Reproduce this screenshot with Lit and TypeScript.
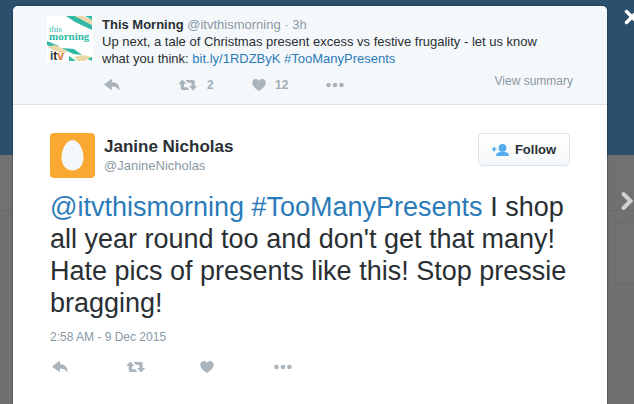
import { LitElement, html, css, svg } from "lit";
import { customElement, property } from "lit/decorators.js";

const replyIcon = svg`<svg width="16" height="12" viewBox="0 0 16 12"><path d="M6.800.4c.6-.6 1.200-.2 1.200.5v2.300c4.500 0 7.300 2.600 7.600 6.800.1 1-.9 1.100-1.300.4C13 8.400 11 7.600 8 7.600v2.500c0 .7-.6 1.100-1.200.5L.8 6.200c-.5-.4-.5-1 0-1.400z"/></svg>`;
const retweetIcon = svg`<svg width="20" height="12" viewBox="0 0 20 12"><path d="M4.300.500 8.500 5H6V8.300h3.200l2.200 2.800H4.600C3.400 11.100 2.700 10.400 2.700 9.200V5H.2zM15.100 11.500 10.900 7h2.500V3.700H9.800L7.600.9h7.200c1.200 0 1.900.7 1.900 1.900V7h2.500z"/></svg>`;
const heartIcon = svg`<svg width="14" height="12" viewBox="0 0 14 12"><path d="M7 12C3 9.300.300 7 .300 3.800.300 1.600 1.800 0 3.800 0 5.200 0 6.400.7 7 1.800 7.600.7 8.800 0 10.200 0c2 0 3.500 1.600 3.500 3.800C13.700 7 11 9.300 7 12z"/></svg>`;
const dotsIcon = svg`<svg width="18" height="12" viewBox="0 0 18 12"><circle cx="2.500" cy="6" r="2.300"/><circle cx="9" cy="6" r="2.300"/><circle cx="15.500" cy="6" r="2.300"/></svg>`;

@customElement("tweet-actions")
export class TweetActions extends LitElement {
  @property() retweets = "";
  @property() likes = "";

  static styles = css`
    :host { display: block; }
    .row { display: grid; grid-template-columns: repeat(4, 74px); }
    .action {
      display: flex; align-items: center; gap: 9px; height: 16px;
      padding: 0; border: 0; background: none; cursor: pointer;
      color: #a3afb8; font: bold 12px/16px "Liberation Sans", Arial, sans-serif;
    }
    svg { display: block; fill: #aab4bc; }
  `;

  render() {
    return html`<div class="row">
      <button class="action" aria-label="Reply">${replyIcon}</button>
      <button class="action" aria-label="Retweet">${retweetIcon}${this.retweets}</button>
      <button class="action" aria-label="Like">${heartIcon}${this.likes}</button>
      <button class="action" aria-label="More">${dotsIcon}</button>
    </div>`;
  }
}

@customElement("app-root")
export class AppRoot extends LitElement {
  static styles = css`
    :host {
      display: grid; min-height: 100vh; position: relative; overflow: hidden;
      font: 13px/17px "Liberation Sans", Arial, sans-serif; color: #292f33;
      background: #6f7072;
    }
    .backdrop, .dialog { grid-area: 1 / 1; }
    .banner { height: 155px; background: #2c4f6e; }
    .tabs { height: 55px; background: #717171; border-bottom: 1px solid #696a6b; }
    .panel {
      width: 40px; height: 60px; margin: 11px -22px 0 auto;
      border: 1px solid #68696a; border-radius: 4px; background: #717171;
    }
    .dialog {
      margin: 6px 27px 0 13px; background: #fff; overflow: hidden;
      border-radius: 5px 5px 0 0; box-shadow: 0 0 2px #142535;
    }
    a { color: #2b7bb9; text-decoration: none; }
    .parent {
      display: grid; grid-template-columns: 46px 1fr; column-gap: 9px;
      padding: 10px 34px 11px; background: #f5f8fa; border-bottom: 1px solid #d5e2e8;
    }
    .logo { display: block; width: 46px; height: 46px; }
    .logo text { font-family: "Liberation Serif", serif; fill: #2fb9a6; }
    .logo .itv { font-family: "Liberation Sans", sans-serif; font-weight: bold; }
    .copy { margin: 0; padding-right: 16px; }
    .author { color: #292f33; }
    .muted, .muted a { color: #8899a6; }
    .small { font-size: 12px; }
    .foot { display: flex; justify-content: space-between; align-items: flex-start; padding-left: 2px; }
    .foot tweet-actions { margin-top: 10px; }
    .summary { margin-top: 6px; }
    .tweet { padding: 28px 37px; }
    .head { display: flex; align-items: center; gap: 9px; }
    .egg { width: 45px; height: 45px; display: block; }
    .who { flex: 1; }
    .name { margin: 0; font-size: 17px; line-height: 20px; font-weight: bold; }
    .name a { color: #292f33; }
    .follow {
      display: flex; align-items: center; justify-content: center; gap: 6px;
      width: 92px; height: 33px; padding: 0; align-self: flex-start;
      border: 1px solid #dfe5e9; border-radius: 4px; cursor: pointer;
      background: linear-gradient(#fff, #f5f8fa); color: #292f33;
      font: bold 13px/17px "Liberation Sans", Arial, sans-serif;
    }
    .message { margin: 13px 0 0; font-size: 27px; line-height: 32px; }
    .date { margin: 10px 0 0; }
    .date a { color: #8899a6; }
    .main-actions { margin-top: 13px; padding-left: 2px; }
    .close, .next { position: absolute; padding: 0; border: 0; background: none; cursor: pointer; }
    .close { right: -6px; top: 9px; }
    .next { right: 0; top: 191px; }
    .close svg, .next svg { display: block; }
  `;

  render() {
    return html`
      <div class="backdrop">
        <div class="banner"></div>
        <div class="tabs"></div>
        <div class="panel"></div>
      </div>
      <main class="dialog">
        <article class="parent">
          <svg class="logo" viewBox="0 0 46 46" role="img" aria-label="This Morning">
            <rect width="46" height="46" fill="#fff"/>
            <path d="M19 0h9l17 9v5L28 6z" fill="#31b9a5"/>
            <path d="M28 0h8l9 4v5z" fill="#ecd7a8"/>
            <path d="M38 0h7v4zM0 25l12 5-6 2-6-3z" fill="#31b9a5"/>
            <path d="M0 31l8-2 13 6-5 3z" fill="#ecd7a8"/>
            <path d="M15 32l12 1 8 6-9-1zM22 40l7 5h-7zM38 42l7-1v4z" fill="#31b9a5"/>
            <path d="M27 41l9-2 8 2-6 4h-7z" fill="#ecd7a8"/>
            <text x="2" y="16" font-size="9">this</text>
            <text x="2" y="24" font-size="11" font-weight="bold">morning</text>
            <text class="itv" x="3" y="44" font-size="12"><tspan fill="#254a60">i</tspan><tspan fill="#222">t</tspan><tspan fill="#e27837">v</tspan></text>
          </svg>
          <div>
            <p class="copy"><a href="#profile"><strong class="author">This Morning</strong></a> <span class="muted"><a href="#profile">@itvthismorning</a> · 3h</span></p>
            <p class="copy">Up next, a tale of Christmas present excess vs festive frugality - let us know what you think: <a href="#link">bit.ly/1RDZByK</a> <a href="#tag">#TooManyPresents</a></p>
            <div class="foot">
              <tweet-actions retweets="2" likes="12"></tweet-actions>
              <span class="summary muted small"><a href="#summary">View summary</a></span>
            </div>
          </div>
        </article>
        <article class="tweet">
          <header class="head">
            <svg class="egg" viewBox="0 0 45 45" role="img" aria-label="Profile picture">
              <rect width="45" height="45" rx="4" fill="#fba833"/>
              <path d="M22.500 7C29 7 33.500 17 33.500 24.500c0 7.500-4.500 13-11 13s-11-5.500-11-13C11.500 17 16 7 22.500 7z" fill="#f5f8fa"/>
            </svg>
            <div class="who">
              <h1 class="name"><a href="#janine">Janine Nicholas</a></h1>
              <span class="muted"><a href="#janine">@JanineNicholas</a></span>
            </div>
            <button class="follow">
              <svg width="17" height="12" viewBox="0 0 17 12" fill="#55acee"><circle cx="10.500" cy="3.900" r="3.900"/><path d="M4 12c0-3 2-4 4.500-4h4c2.500 0 4.500 1 4.500 4zM0 4.500h1.500V3h1.500v1.500h1.500V6H3v1.500H1.500V6H0z"/></svg>
              Follow
            </button>
          </header>
          <p class="message"><a href="#profile">@itvthismorning</a> <a href="#tag">#TooManyPresents</a> I shop all year round too and don't get that many! Hate pics of presents like this! Stop pressie bragging!</p>
          <p class="date small"><a href="#status">2:58 AM - 9 Dec 2015</a></p>
          <tweet-actions class="main-actions"></tweet-actions>
        </article>
      </main>
      <button class="close" aria-label="Close"><svg width="16" height="16" viewBox="0 0 16 16"><path d="M2.500 2.500l11 11M13.500 2.500l-11 11" stroke="#fff" stroke-width="3.500" stroke-linecap="round"/></svg></button>
      <button class="next" aria-label="Next"><svg width="14" height="20" viewBox="0 0 14 20"><path d="M3.500 3l7 7-7 7" fill="none" stroke="#d0d0d0" stroke-width="4" stroke-linecap="round"/></svg></button>
    `;
  }
}
